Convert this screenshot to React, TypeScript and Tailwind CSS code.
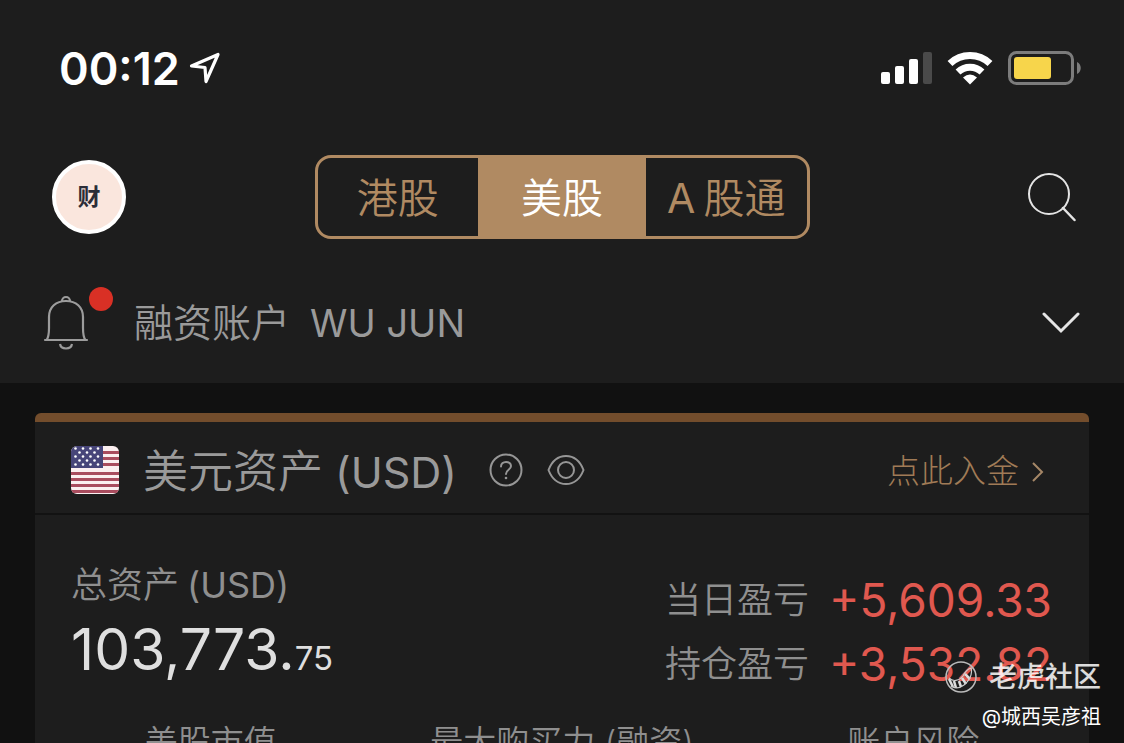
import type { ReactNode } from 'react';

const markets = [
  { id: 'hk', label: '港股' },
  { id: 'us', label: '美股' },
  { id: 'cn', prefix: 'A', label: '股通' },
];

const activeMarket = 'us';

const profits = [
  { label: '当日盈亏', value: '+5,609.33' },
  { label: '持仓盈亏', value: '+3,532.82' },
];

const stats = ['美股市值', '最大购买力 (融资)', '账户风险'];

function SignalIcon() {
  return (
    <svg width="51" height="33" viewBox="0 0 51 33" aria-hidden="true">
      <rect x="0" y="20" width="9" height="12" rx="2" fill="#fff" />
      <rect x="14" y="14" width="9" height="18" rx="2" fill="#fff" />
      <rect x="28" y="7" width="9" height="25" rx="2" fill="#fff" />
      <rect x="42" y="0" width="9" height="32" rx="2" fill="#4a4a4a" />
    </svg>
  );
}

function WifiIcon() {
  return (
    <svg width="46" height="34" viewBox="0 0 46 34" aria-hidden="true">
      <g fill="none" stroke="#fff" strokeWidth="7">
        <path d="M3 12.500A29 29 0 0 1 43 12.500" />
        <path d="M11 21A17.500 17.500 0 0 1 35 21" />
      </g>
      <path d="M23 33.500L16 26.500Q23 20.500 30 26.500Z" fill="#fff" />
    </svg>
  );
}

function BatteryIcon() {
  return (
    <svg width="74" height="35" viewBox="0 0 74 35" aria-hidden="true">
      <rect x="1.500" y="1.500" width="63" height="31" rx="7" fill="none" stroke="#7c7c7c" strokeWidth="3" />
      <rect x="6" y="6" width="37" height="22" rx="3" fill="#f7d54b" />
      <path d="M69 11C74 13 74 21 69 23Z" fill="#7c7c7c" />
    </svg>
  );
}

function StatusBar() {
  return (
    <div className="flex h-[136px] items-center justify-between pl-[59px] pr-[42px] text-white">
      <div className="flex items-center gap-2">
        <time className="text-[45px] font-semibold leading-none">00:12</time>
        <svg width="34" height="34" viewBox="0 0 34 34" fill="none" aria-hidden="true">
          <path d="M3.500 15L30 3.500L18 30.500L17 16.500Z" stroke="#fff" strokeWidth="3.200" strokeLinejoin="round" />
        </svg>
      </div>
      <div className="flex items-center gap-[15px]">
        <SignalIcon />
        <WifiIcon />
        <BatteryIcon />
      </div>
    </div>
  );
}

function TopNav() {
  return (
    <div className="grid grid-cols-[1fr_auto_1fr] items-center px-12 pt-[19px]">
      <button
        type="button"
        aria-label="财"
        className="ml-1 flex h-[74px] w-[74px] items-center justify-center rounded-full border-4 border-white bg-[#fae6dd] text-[23px] font-bold text-[#2b2d38]"
      >
        财
      </button>

      <div className="flex h-[84px] w-[495px] overflow-hidden rounded-2xl border-[3px] border-[#b08a62]">
        {markets.map((m) => (
          <button
            key={m.id}
            type="button"
            aria-pressed={m.id === activeMarket}
            className={
              m.id === activeMarket
                ? 'w-[168px] bg-[#b08a62] pt-1 text-[41px] font-[350] text-white'
                : 'flex-1 pt-1 text-[41px] font-[350] text-[#b08a62]'
            }
          >
            {m.prefix && <span className="mr-2 font-normal">{m.prefix}</span>}
            {m.label}
          </button>
        ))}
      </div>

      <button type="button" aria-label="搜索" className="justify-self-end">
        <svg width="50" height="50" viewBox="0 0 50 50" fill="none" stroke="#e4e4e4" aria-hidden="true">
          <circle cx="23" cy="22" r="20" strokeWidth="2" />
          <path d="M37 36L48.500 48" strokeWidth="2.500" strokeLinecap="round" />
        </svg>
      </button>
    </div>
  );
}

function AccountRow() {
  return (
    <div className="flex h-[144px] items-center pl-[43px] pr-[44px] pt-6">
      <button type="button" aria-label="消息" className="relative">
        <svg width="46" height="56" viewBox="0 0 46 56" fill="none" stroke="#9c9c9c" strokeWidth="2.200" aria-hidden="true">
          <path d="M2 45H44" strokeLinecap="round" />
          <path d="M3.500 45C6 42 6 38 6 33V22C6 12 13 6 23 6S40 12 40 22V33C40 38 40 42 42.500 45" />
          <path d="M19 6A4 4 0 0 1 27 6" />
          <path d="M17 49C18 55 28 55 29 49" />
        </svg>
        <span className="absolute -right-6 -top-2 h-6 w-6 rounded-full bg-[#d93025]" />
      </button>
      <button type="button" className="flex flex-1 items-center justify-between pl-[45px] text-[39px] font-[350] text-[#9a9a9a]">
        <span className="flex items-baseline gap-5">
          <span>融资账户</span>
          <span className="text-[38px] font-normal">WU JUN</span>
        </span>
        <svg width="38" height="22" viewBox="0 0 38 22" fill="none" aria-hidden="true">
          <path d="M2 2L19 19L36 2" stroke="#e6e6e6" strokeWidth="3" strokeLinecap="round" />
        </svg>
      </button>
    </div>
  );
}

function UsFlag() {
  const stripes = [5, 11, 17, 26, 32, 38, 44];
  return (
    <svg width="48" height="48" viewBox="0 0 48 48" className="rounded-md" aria-hidden="true">
      <rect width="48" height="48" fill="#fbeff0" />
      {stripes.map((y) => (
        <rect key={y} y={y} width="48" height="3" fill="#a94c5e" />
      ))}
      <rect width="32" height="22" fill="#474579" />
      {[0, 1, 2, 3, 4].map((row) =>
        [0, 1, 2, 3].slice(0, row % 2 ? 3 : 4).map((col) => (
          <circle key={`${row}-${col}`} cx={(row % 2 ? 8.5 : 4.5) + col * 7.5} cy={2.500 + row * 4} r="1.300" fill="#fff" />
        )),
      )}
    </svg>
  );
}

function IconButton({ label, children }: { label: string; children: ReactNode }) {
  return (
    <button type="button" aria-label={label}>
      {children}
    </button>
  );
}

function AssetCard() {
  return (
    <section className="mx-[35px] mt-[30px] overflow-hidden rounded-t-md border-t-[9px] border-[#734d2c] bg-[#1d1d1d]">
      <header className="flex h-[93px] items-center justify-between border-b-2 border-[#121212] pl-9 pr-[45px] pt-1">
        <div className="flex items-center">
          <UsFlag />
          <h1 className="ml-6 pt-1 text-[45px] font-[350] leading-none text-[#9a9a9a]">
            美元资产<span className="ml-3 text-[43px] font-normal">(USD)</span>
          </h1>
          <div className="ml-8 flex items-center gap-6">
            <IconButton label="说明">
              <svg width="34" height="34" viewBox="0 0 34 34" fill="none" stroke="#969696" strokeWidth="2" aria-hidden="true">
                <circle cx="17" cy="17" r="15.500" />
                <path d="M12 13.500C12 7.500 22 7.500 22 13C22 17 17 16.500 17 21" strokeLinecap="round" />
                <circle cx="17" cy="25" r="1.300" fill="#969696" stroke="none" />
              </svg>
            </IconButton>
            <IconButton label="显示金额">
              <svg width="38" height="32" viewBox="0 0 38 32" fill="none" stroke="#969696" strokeWidth="2" aria-hidden="true">
                <path d="M1.500 16C5 7 11 2 19 2S33 7 36.500 16C33 25 27 30 19 30S5 25 1.500 16Z" />
                <circle cx="19" cy="16" r="8" />
              </svg>
            </IconButton>
          </div>
        </div>
        <a href="#deposit" className="flex items-center gap-3 pt-1 text-[33px] font-light leading-none text-[#a07b56]">
          点此入金
          <svg width="13" height="22" viewBox="0 0 13 22" fill="none" aria-hidden="true">
            <path d="M2 2L11 11L2 20" stroke="#a58767" strokeWidth="2" />
          </svg>
        </a>
      </header>

      <div className="flex items-start justify-between pl-9 pr-[37px] pt-[45px]">
        <div>
          <h2 className="text-[36px] font-[350] leading-[50px] text-[#8f8f8f]">
            总资产<span className="ml-2 font-normal">(USD)</span>
          </h2>
          <p className="text-[57px] leading-[80px] text-[#dfdfdf]">
            103,773.<span className="text-[33px]">75</span>
          </p>
        </div>
        <dl className="pt-2">
          {profits.map((p) => (
            <div key={p.label} className="flex h-16 items-center justify-between gap-5">
              <dt className="text-[36px] font-[350] text-[#8f8f8f]">{p.label}</dt>
              <dd className="text-[46px] text-[#e0584f]">{p.value}</dd>
            </div>
          ))}
        </dl>
      </div>

      <div className="grid grid-cols-3 pt-5 text-center text-[33px] font-[350] text-[#8f8f8f]">
        {stats.map((s) => (
          <span key={s} className="whitespace-nowrap">{s}</span>
        ))}
      </div>
    </section>
  );
}

function Watermark() {
  return (
    <div className="absolute bottom-2 right-[23px] text-right text-white">
      <div className="flex items-center justify-end gap-3 text-[28px] font-medium leading-[44px] text-white/85">
        <svg width="32" height="32" viewBox="0 0 32 32" fill="none" aria-hidden="true">
          <circle cx="16" cy="16" r="15" stroke="#bbb" strokeWidth="1.500" />
          <g stroke="#ddd" strokeWidth="2.500">
            <path d="M4 18L8 26" />
            <path d="M9 20L11 27" />
            <path d="M14 20L16 26" />
            <path d="M17 17L21 23" />
            <path d="M20 13L25 18" />
          </g>
          <path d="M4 17C8 21 14 20 18 15C20 11 22 8 26 7C28 13 24 20 19 24C15 27 10 28 6 25" stroke="#ccc" strokeWidth="1.200" />
        </svg>
        老虎社区
      </div>
      <p className="text-[20px] leading-9">@城西吴彦祖</p>
    </div>
  );
}

export default function App() {
  return (
    <main
      lang="zh-CN"
      className="relative h-screen overflow-hidden bg-[#111] font-['Inter','Noto_Sans_CJK_SC',sans-serif]"
    >
      <div className="bg-[#1d1d1d]">
        <StatusBar />
        <TopNav />
        <AccountRow />
      </div>
      <AssetCard />
      <Watermark />
    </main>
  );
}
